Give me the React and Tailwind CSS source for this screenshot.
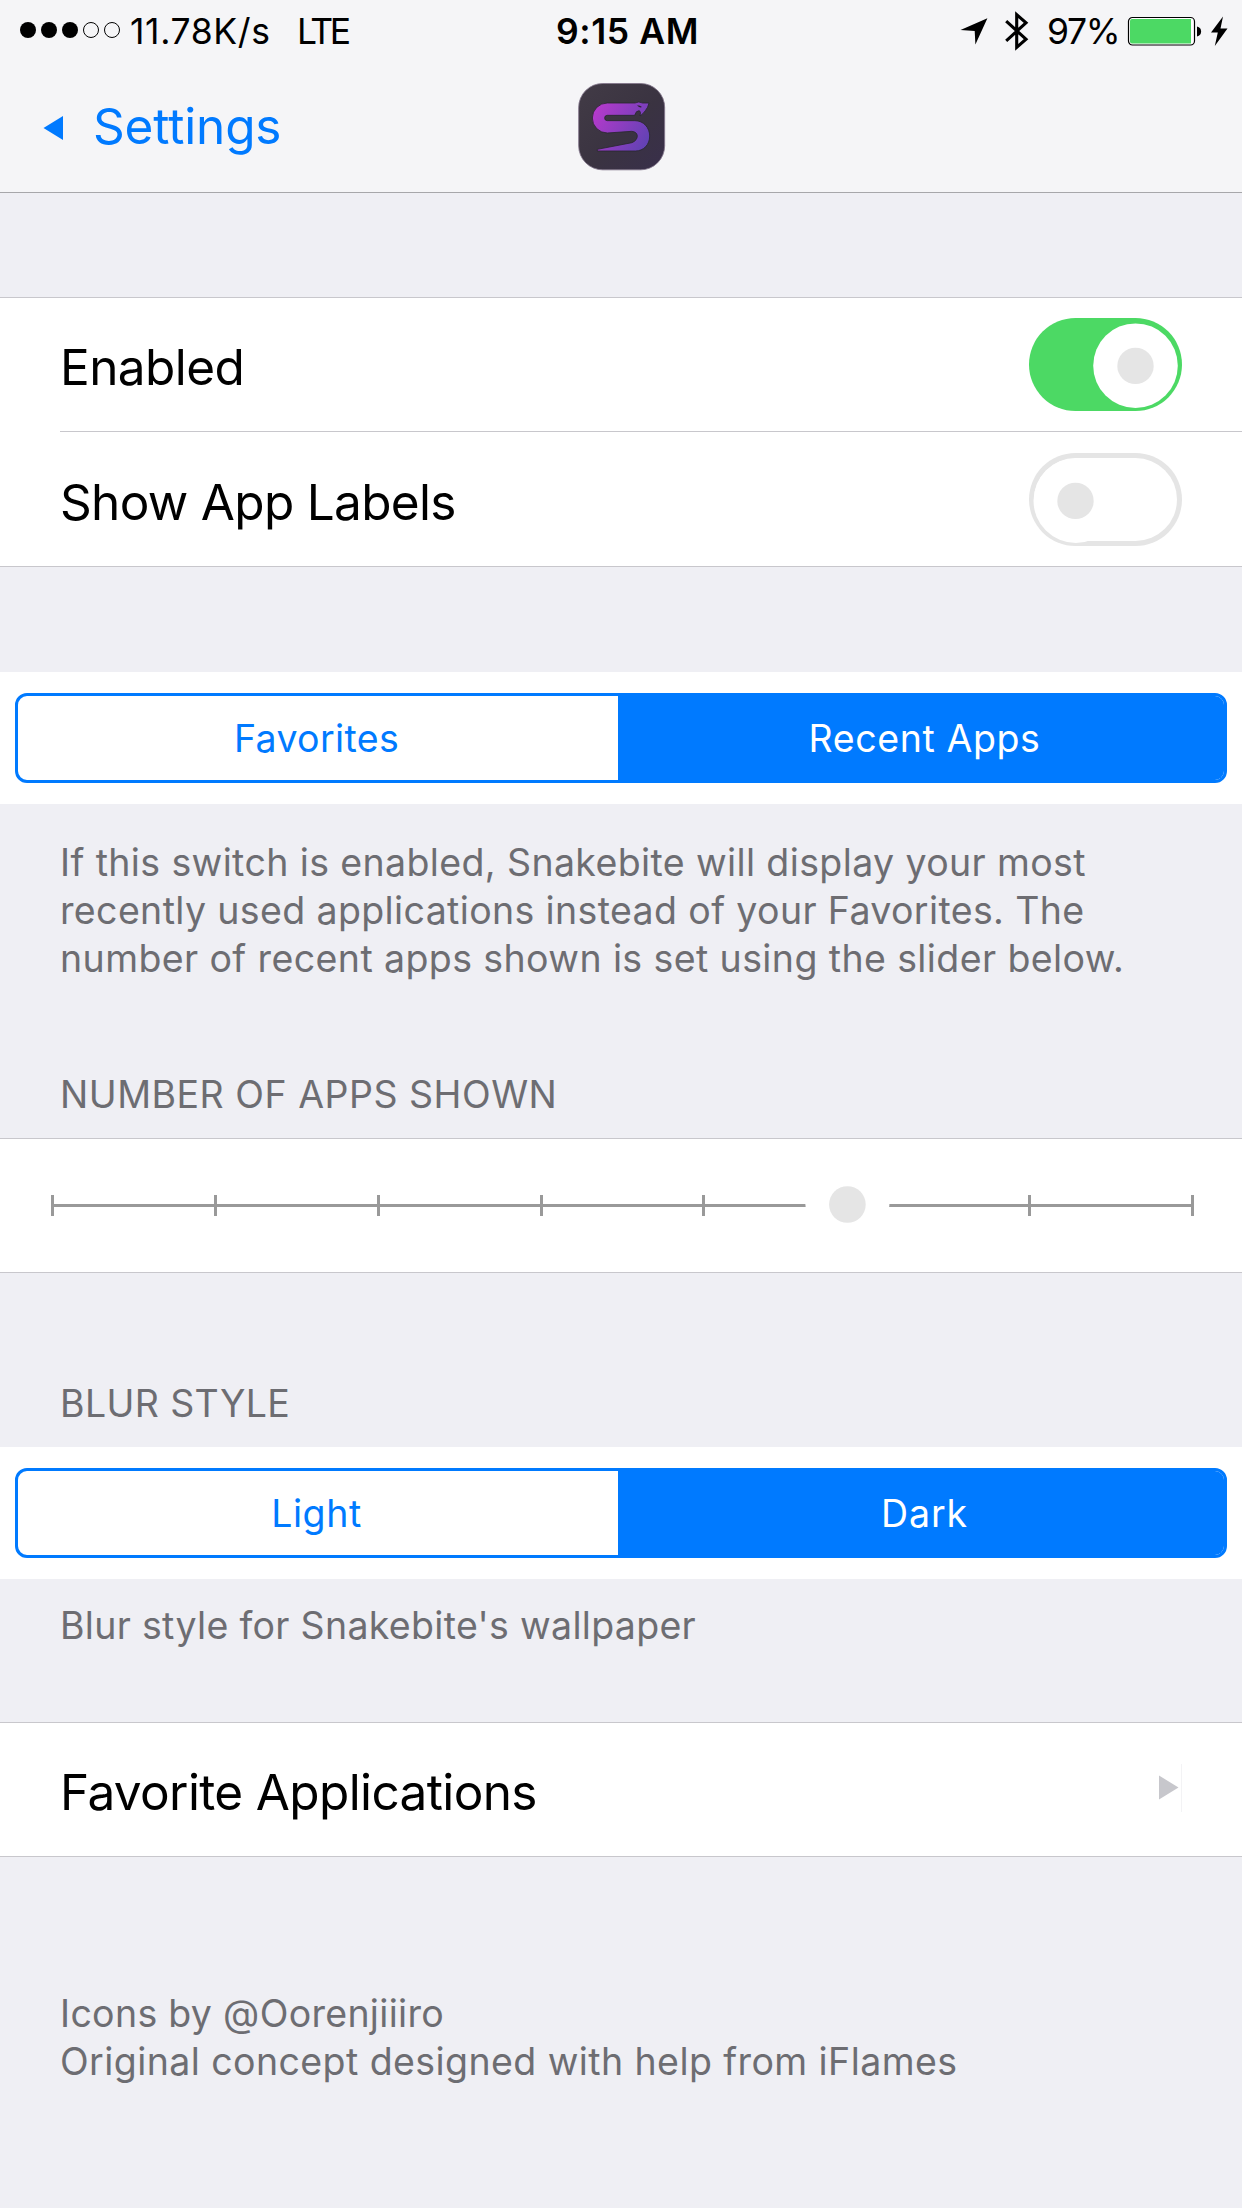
import React from 'react';

function StatusBar() {
  return (
    <div className="flex h-[62px] w-full items-center text-[35.5px] leading-[60px] text-black">
      <div className="flex w-[556px] items-center pl-5">
        <svg className="mr-[9px] h-[18px] w-[101px] shrink-0" viewBox="0 0 101 18">
          <circle cx="8" cy="8" r="8" />
          <circle cx="29" cy="8" r="8" />
          <circle cx="50" cy="8" r="8" />
          <circle cx="71" cy="8" r="7.5" fill="none" stroke="#000" />
          <circle cx="92" cy="8" r="7.5" fill="none" stroke="#000" />
        </svg>
        <span className="w-[167px] shrink-0 pt-[2px] tracking-[0.64px]">11.78K/s</span>
        <span className="pt-[2px] tracking-[-3.4px]">LTE</span>
      </div>
      <div className="w-[403px] pt-[2px] font-semibold tracking-[0.59px]">9:15 AM</div>
      <svg className="h-[30px] w-[30px]" viewBox="0 0 30 30">
        <path d="M28.4 2.2 1.5 14l14.2.9.7 13.5z" />
      </svg>
      <svg className="ml-[15px] h-[44px] w-[26px]" viewBox="0 0 26 44" fill="none" stroke="#000" strokeWidth="3.1">
        <path d="M2.2 12.2 22 30.2 12.7 38.4V5.6L22 13.8 2.2 31.8" />
      </svg>
      <span className="ml-[17px] w-[80px] pt-[2px] tracking-[-1.35px]">97%</span>
      <svg className="h-[32px] w-[102px] shrink-0" viewBox="0 0 102 32">
        <rect x="1.5" y="2.5" width="66" height="27.5" rx="4" fill="#fff" stroke="#000" strokeWidth="1.2" />
        <path d="M5 4h59v24.5H5a2 2 0 0 1-2-2V6a2 2 0 0 1 2-2z" fill="#4cd964" />
        <path d="M70 11.5c5.5 1 5.5 9 0 10z" />
        <path d="M96 1.5 84 17.5h6.8l-3 13.5L100.5 13.5h-7z" />
      </svg>
    </div>
  );
}

function SnakeLogo() {
  return (
    <svg className="h-[88px] w-[88px]" viewBox="0 0 264 264">
      <defs>
        <linearGradient id="tile" x1="0" y1="0" x2="1" y2="1">
          <stop offset="0" stopColor="#423b46" />
          <stop offset="0.55" stopColor="#3a3341" />
          <stop offset="1" stopColor="#392f4b" />
        </linearGradient>
        <linearGradient id="snake" gradientUnits="userSpaceOnUse" x1="50" y1="90" x2="205" y2="180">
          <stop offset="0" stopColor="#b33acb" />
          <stop offset="1" stopColor="#6342b4" />
        </linearGradient>
      </defs>
      <rect x="2" y="1.5" width="258" height="259" rx="72" fill="url(#tile)" stroke="#82758a" strokeWidth="2.5" />
      <path
        d="M88 60H171Q182 54 194 60H213Q210 74 202 83Q196 92 186 99Q190 86 184 83Q174 82 170 97H88A8 8 0 0 0 88 113H170C198 113 215 135 215 159C215 185 197 204 172 204H58V199L162 179Q178 172 178 158Q176 146 161 145L88 150A45 45 0 0 1 88 60Z"
        fill="url(#snake)"
        stroke="#292630"
        strokeWidth="2.5"
      />
      <path d="M177 67q10 0 15 5-8 4-15-5z" fill="#292630" />
    </svg>
  );
}

function Switch({ on }) {
  return (
    <svg className="h-[93px] w-[153px]" viewBox="0 0 153 93">
      <rect width="153" height="93" rx="46.5" fill={on ? '#4cd964' : '#e5e5e5'} />
      {!on && <rect x="5" y="5" width="143" height="83" rx="41.5" fill="#fff" />}
      <circle cx={on ? 106.5 : 46.8} cy="47.7" r="42.3" fill="#fff" />
      <circle cx={on ? 106.5 : 46.5} cy="47.9" r="18.2" fill="#e5e5e5" />
    </svg>
  );
}

function Segmented({ left, right, leftClass, rightClass }) {
  return (
    <div className="h-[132px] w-full bg-white px-[15px] py-[21px]">
      <div className="flex h-[90px] w-full overflow-hidden rounded-[12px] border-[3px] border-[#007aff] text-[37.5px] leading-[86px]">
        <div className={`w-[600px] shrink-0 pr-[3px] text-center text-[#007aff] ${leftClass}`}>{left}</div>
        <div className={`flex-1 bg-[#007aff] pl-[7px] text-center text-white ${rightClass}`}>{right}</div>
      </div>
    </div>
  );
}

const ticks = [0, 1, 2, 3, 4, 5, 6, 7];

function Slider() {
  return (
    <svg className="h-[133px] w-full" viewBox="0 0 1242 133">
      <rect x="51" y="65" width="1143" height="3" fill="#999" />
      {ticks.map((t) => (
        <rect key={t} x={Math.round(51 + t * 162.86)} y="56" width="3" height="21" fill="#999" />
      ))}
      <circle cx="847.4" cy="65.5" r="42" fill="#fff" />
      <circle cx="847.4" cy="65.5" r="18.3" fill="#e5e5e5" />
    </svg>
  );
}

const NOTE = 'pl-[60px] text-[37.5px] leading-[48px] text-[#6d6d72] whitespace-nowrap';

export default function App() {
  return (
    <div className="flex h-[2208px] w-[1242px] flex-col overflow-hidden bg-[#efeff4] font-['Inter','Liberation_Sans',sans-serif] text-black">
      <header className="h-[193px] shrink-0 border-b border-[#a7a7aa] bg-[#f5f5f7]">
        <StatusBar />
        <div className="flex h-[130px] items-center">
          <div className="flex w-[578px] items-center pl-[43px] text-[#007aff]">
            <svg className="mt-[2px] h-[26px] w-[21px]" viewBox="0 0 21 26">
              <path d="M20 1v24L.5 13z" fill="#007aff" />
            </svg>
            <span className="ml-[29px] pb-[2px] text-[49.5px] leading-[60px] tracking-[-0.15px]">Settings</span>
          </div>
          <SnakeLogo />
        </div>
      </header>

      <section className="mt-[104px] h-[270px] shrink-0 border-y border-[#c8c7cc] bg-white pl-[60px]">
        <div className="flex h-[134px] items-center justify-between border-b border-[#c8c7cc] pr-[60px]">
          <span className="pt-[4px] text-[49.5px] leading-[60px] tracking-[-0.57px]">Enabled</span>
          <Switch on />
        </div>
        <div className="flex h-[134px] items-center justify-between pr-[60px]">
          <span className="pt-[5px] text-[49.5px] leading-[60px] tracking-[-0.69px]">Show App Labels</span>
          <Switch on={false} />
        </div>
      </section>

      <section className="mt-[105px] shrink-0">
        <Segmented left="Favorites" right="Recent Apps" leftClass="tracking-[0.35px]" rightClass="tracking-[0.6px]" />
        <div className={`${NOTE} pt-[35px]`}>
          <div className="tracking-[0.38px]">If this switch is enabled, Snakebite will display your most</div>
          <div className="tracking-[0.37px]">recently used applications instead of your Favorites. The</div>
          <div className="tracking-[0.4px]">number of recent apps shown is set using the slider below.</div>
        </div>
      </section>

      <section className="mt-[88px] shrink-0">
        <h2 className={`${NOTE} pb-[19px] tracking-[0.5px]`}>NUMBER OF APPS SHOWN</h2>
        <div className="h-[135px] border-y border-[#c8c7cc] bg-white">
          <Slider />
        </div>
      </section>

      <section className="mt-[107px] shrink-0">
        <h2 className={`${NOTE} pb-[19px] tracking-[0.37px]`}>BLUR STYLE</h2>
        <Segmented left="Light" right="Dark" leftClass="tracking-[0.6px]" rightClass="tracking-[0.9px]" />
        <p className={`${NOTE} pt-[23px] tracking-[0.31px]`}>Blur style for Snakebite's wallpaper</p>
      </section>

      <section className="mt-[72px] flex h-[135px] shrink-0 items-center justify-between border-y border-[#c8c7cc] bg-white pr-[59px] pl-[60px]">
        <span className="pt-[5px] text-[49.5px] leading-[60px] tracking-[-0.63px]">Favorite Applications</span>
        <svg className="mb-[3px] h-[48px] w-[24px]" viewBox="0 0 24 48">
          <path d="M0 11.5v24L19.5 23.5z" fill="#c7c7cc" />
          <rect x="22" width="1" height="48" fill="#f3f3f5" />
        </svg>
      </section>

      <footer className={`${NOTE} mt-[133px] shrink-0`}>
        <div className="tracking-[0.31px]">Icons by @Oorenjiiiro</div>
        <div className="tracking-[0.42px]">Original concept designed with help from iFlames</div>
      </footer>
    </div>
  );
}
